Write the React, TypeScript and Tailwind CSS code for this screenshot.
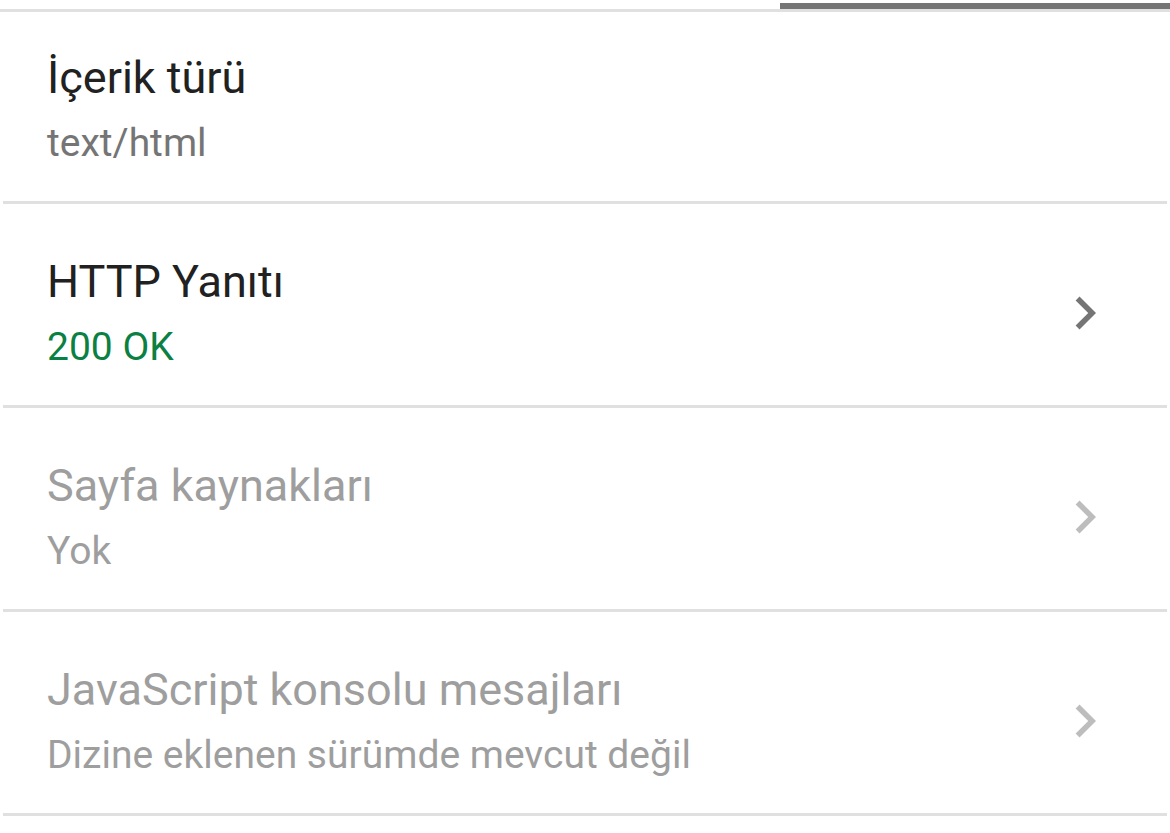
import React from "react";

type Row = {
  title: string;
  subtitle: string;
  variant: "plain" | "ok" | "disabled";
  chevron: boolean;
  first?: boolean;
};

const rows: Row[] = [
  { title: "İçerik türü", subtitle: "text/html", variant: "plain", chevron: false, first: true },
  { title: "HTTP Yanıtı", subtitle: "200 OK", variant: "ok", chevron: true },
  { title: "Sayfa kaynakları", subtitle: "Yok", variant: "disabled", chevron: true },
  { title: "JavaScript konsolu mesajları", subtitle: "Dizine eklenen sürümde mevcut değil", variant: "disabled", chevron: true },
];

function Chevron({ disabled }: { disabled: boolean }) {
  return (
    <svg width="66" height="66" viewBox="0 0 24 24" className="shrink-0">
      <path
        d="M10 6 8.59 7.41 13.17 12l-4.58 4.59L10 18l6-6z"
        fill={disabled ? "#bdbdbd" : "#757575"}
      />
    </svg>
  );
}

export default function App() {
  return (
    <div className="w-[1170px] h-[833px] bg-white font-['Roboto',sans-serif] overflow-hidden">
      <div className="h-[3px]" />
      <div className="flex h-[6px]">
        <div className="w-[780px]" />
        <div className="flex-1 bg-[#757575]" />
      </div>
      <div className="h-[3px] bg-[#e0e0e0]" />
      {rows.map((r) => {
        const titleColor = r.variant === "disabled" ? "text-[#9e9e9e]" : "text-[#212121]";
        const subColor =
          r.variant === "ok"
            ? "text-[#0b8043]"
            : r.variant === "disabled"
            ? "text-[#9e9e9e]"
            : "text-[#757575]";
        return (
          <div key={r.title}>
            <div
              className={`flex items-center pl-[47px] pr-[52px] ${
                r.first ? "pt-[40px] pb-[35px]" : "pt-[52px] pb-[35px]"
              }`}
            >
              <div className="flex-1 flex flex-col">
                <div className={`text-[45px] leading-[52px] ${titleColor}`}>{r.title}</div>
                <div className={`mt-[16px] text-[39px] leading-[46px] ${subColor}`}>{r.subtitle}</div>
              </div>
              {r.chevron && <Chevron disabled={r.variant === "disabled"} />}
            </div>
            <div className="mx-[3px] h-[3px] bg-[#e0e0e0]" />
          </div>
        );
      })}
    </div>
  );
}
